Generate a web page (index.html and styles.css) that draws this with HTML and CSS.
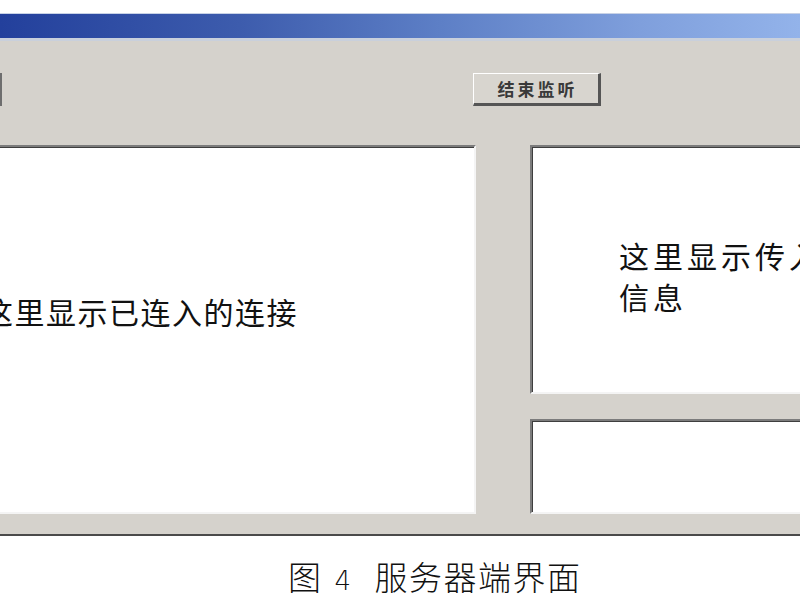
FILE: index.html
```html
<!DOCTYPE html>
<html lang="zh">
<head>
<meta charset="utf-8">
<title>服务器端界面</title>
<link rel="stylesheet" href="styles.css">
</head>
<body>
<div class="page">
  <div class="titlebar"></div>
  <div class="window">
    <div class="toolbar">
      <div class="stub-btn"></div>
      <button class="btn">结束监听</button>
    </div>
    <div class="main">
      <div class="panel panel-left">
        <div class="panel-text left-text">这里显示已连入的连接</div>
      </div>
      <div class="right-col">
        <div class="panel panel-top">
          <div class="panel-text right-text">这里显示传入的<br>信息</div>
        </div>
        <div class="panel panel-bottom"></div>
      </div>
    </div>
  </div>
  <div class="caption">图<span class="num">4</span>服务器端界面</div>
</div>
</body>
</html>
```

FILE: styles.css
```css
html, body {
  margin: 0;
  padding: 0;
  background: #ffffff;
}

.page {
  width: 800px;
  height: 600px;
  overflow: hidden;
  font-family: "Noto Sans CJK SC", "Noto Sans", sans-serif;
}

.titlebar {
  margin-top: 13px;
  height: 24px;
  background: linear-gradient(to right, #23409c 0%, #3d5cad 30%, #5d7fc6 55%, #7f9fdc 80%, #93b3ea 100%);
  border-top: 1px solid #c8d2e6;
  border-bottom: 3px solid #c9d0dc;
}

.window {
  background: #d5d2cc;
  height: 495px;
  border-bottom: 2px solid #4a4a4a;
  box-sizing: border-box;
  padding-top: 32px;
}

.toolbar {
  display: flex;
  height: 33px;
}

.stub-btn {
  width: 0;
  margin-left: -10px;
  padding-left: 10px;
  height: 33px;
  border-right: 2px solid #6e6e6e;
  box-sizing: content-box;
  flex-shrink: 0;
}

.btn {
  flex-shrink: 0;
  margin-left: 471px;
  width: 128px;
  height: 33px;
  padding: 0;
  background: #d8d5cf;
  border-style: solid;
  border-width: 1px 3px 3px 1px;
  border-color: #ffffff #555555 #555555 #ffffff;
  font-family: "Noto Sans CJK SC", sans-serif;
  font-size: 17px;
  font-weight: 700;
  letter-spacing: 3px;
  color: #3a3a3a;
  text-indent: 3px;
  line-height: 27px;
}

.main {
  display: flex;
  margin-top: 39px;
  height: 369px;
  gap: 54px;
}

.panel {
  background: #ffffff;
  box-sizing: border-box;
  border-style: solid;
  border-width: 2px;
  border-color: #7c7c7c #f4f4f4 #f4f4f4 #7c7c7c;
  box-shadow: inset 1px 1px 0 #3e3e3e;
}

.panel-left {
  flex-shrink: 0;
  margin-left: -30px;
  width: 506px;
  height: 369px;
}

.right-col {
  display: flex;
  flex-direction: column;
  gap: 25px;
  width: 340px;
  flex-shrink: 0;
}

.panel-top {
  height: 249px;
}

.panel-bottom {
  height: 95px;
}

.panel-text {
  white-space: nowrap;
  color: #111111;
  font-size: 30px;
  line-height: 41px;
}

.left-text {
  padding-top: 144px;
  padding-left: 11px;
  letter-spacing: 1.5px;
}

.right-text {
  padding-top: 88px;
  padding-left: 87px;
  letter-spacing: 4px;
}

.caption {
  padding-top: 20px;
  padding-left: 288px;
  font-size: 33px;
  line-height: 40px;
  font-weight: 300;
  letter-spacing: 1.5px;
  color: #111111;
  white-space: nowrap;
}

.num {
  display: inline-block;
  margin-left: 12px;
  margin-right: 22px;
  font-family: "DejaVu Sans", sans-serif;
  font-weight: 300;
  font-size: 26px;
}
```
